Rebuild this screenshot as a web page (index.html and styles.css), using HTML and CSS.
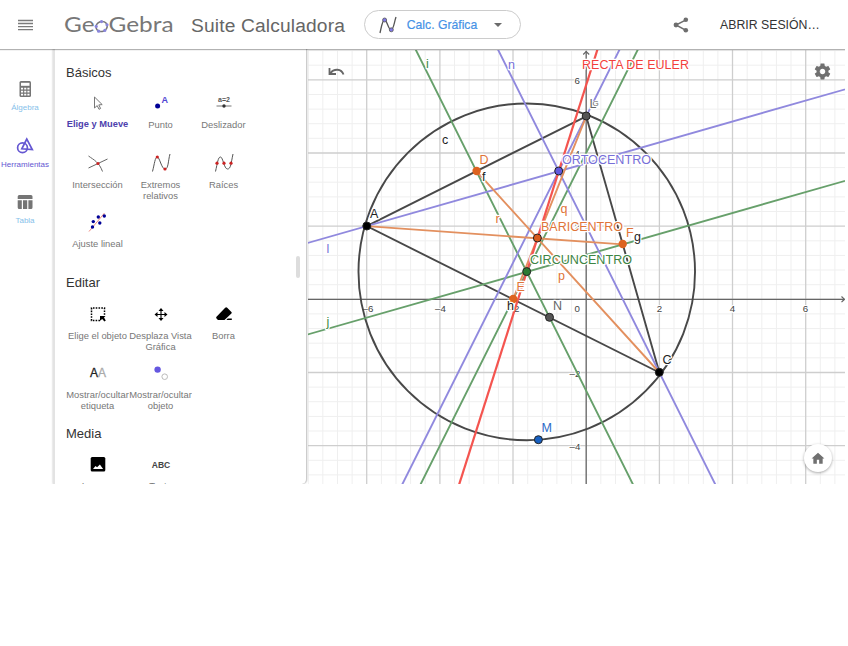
FILE: index.html
```
<!DOCTYPE html>
<html lang="es">
<head>
<meta charset="UTF-8" />
<meta name="viewport" content="width=device-width, initial-scale=1" />
<title>GeoGebra - Suite Calculadora</title>
<link rel="stylesheet" href="styles.css">
</head>
<body>
<div class="app">
  <header class="topbar">
    <button class="menu-btn" aria-label="Menú">
      <svg width="15" height="12" viewBox="0 0 15 12"><path d="M0 1.5h15M0 4.5h15M0 7.6h15M0 10.7h15" stroke="#7b7b7b" stroke-width="1.3"/></svg>
    </button>
    <svg class="logo" width="112" height="32" viewBox="0 -4 112 32">
      <g class="logo-text">
        <text x="0" y="19.3" textLength="30.5" lengthAdjust="spacingAndGlyphs">Ge</text>
        <text x="44.5" y="19.3" textLength="65" lengthAdjust="spacingAndGlyphs">Gebra</text>
      </g>
      <ellipse cx="37.6" cy="13.5" rx="5.7" ry="5" fill="none" stroke="#777" stroke-width="1.5" transform="rotate(-18 37.6 13.5)"/>
      <g fill="#8a86dc">
        <circle cx="37.5" cy="8.6" r="1.6"/><circle cx="43" cy="11.8" r="1.6"/><circle cx="40.8" cy="17.4" r="1.6"/>
        <circle cx="34.6" cy="18.2" r="1.6"/><circle cx="32.2" cy="13.4" r="1.6"/>
      </g>
    </svg>
    <div class="suite">Suite Calculadora</div>
    <button class="app-picker">
      <svg width="18" height="18" viewBox="0 0 18 18">
        <path d="M1 17C2.6 10 3.6 3.5 5.6 3.5S9.5 14 12 14S15 7 17 1" fill="none" stroke="#555" stroke-width="1.3"/>
        <circle cx="5.6" cy="4" r="2" fill="#8179e6" stroke="#555" stroke-width=".8"/>
        <circle cx="12.3" cy="13.8" r="2" fill="#8179e6" stroke="#555" stroke-width=".8"/>
      </svg>
      <span>Calc. Gráfica</span>
      <svg class="caret" width="8" height="4" viewBox="0 0 8 4"><path d="M0 0h8L4 4z" fill="#6b6b6b"/></svg>
    </button>
    <svg class="share" width="16" height="16" viewBox="0 0 16 16">
      <path d="M13 2.8L3 8l10 5.3" fill="none" stroke="#6e6e6e" stroke-width="1.5"/>
      <g fill="#6e6e6e"><circle cx="12.8" cy="2.8" r="2.3"/><circle cx="3" cy="8" r="2.4"/><circle cx="12.8" cy="13.3" r="2.3"/></g>
    </svg>
    <a class="signin">ABRIR SESIÓN…</a>
  </header>

  <main class="workspace">
    <nav class="rail">
      <a class="rail-item">
        <svg width="18" height="18" viewBox="0 0 18 18">
          <rect x="3.5" y="1" width="11.5" height="16" rx="1.5" fill="#757575"/>
          <rect x="5" y="2.8" width="8.5" height="3" fill="#fff"/>
          <path d="M5 8.6h8.5M5 11.6h8.5M5 14.6h8.5" stroke="#fff" stroke-width="1.9" stroke-dasharray="2.1 1.1"/>
        </svg>
        <span>Álgebra</span>
      </a>
      <a class="rail-item active">
        <svg width="18" height="18" viewBox="0 0 18 18">
          <circle cx="6.5" cy="10.8" r="4.9" fill="none" stroke="#6557d2" stroke-width="1.7"/>
          <path d="M10.8 2L5.8 11.8L16.3 12.6z" fill="none" stroke="#6557d2" stroke-width="1.7"/>
        </svg>
        <span>Herramientas</span>
      </a>
      <a class="rail-item">
        <svg width="18" height="18" viewBox="0 0 18 18">
          <path d="M1.7 3.5q0-1.5 1.5-1.5h11.8q1.5 0 1.5 1.5v2.5h-14.8zM1.7 7.3h4.1v8.7h-2.6q-1.5 0-1.5-1.5zM7 7.3h4.2v8.7H7zM12.4 7.3h4.1v7.2q0 1.5-1.5 1.5h-2.6z" fill="#757575"/>
        </svg>
        <span>Tabla</span>
      </a>
    </nav>

    <section class="tools">
      <h2>Básicos</h2>
      <div class="tool-grid">
        <div class="tool selected">
          <svg width="24" height="24" viewBox="0 0 24 24"><path d="M8.5 6v11l2.7-2.4 1.8 3.7 1.6-.8-1.8-3.6 3.4-.3z" fill="#fff" stroke="#777" stroke-width="1"/></svg>
          <span>Elige y Mueve</span>
        </div>
        <div class="tool">
          <svg width="24" height="24" viewBox="0 0 24 24"><circle cx="8.6" cy="15" r="2.5" fill="#000096"/><text x="12.4" y="11.8" class="icon-point">A</text></svg>
          <span>Punto</span>
        </div>
        <div class="tool">
          <svg width="24" height="24" viewBox="0 0 24 24"><text x="12" y="11" class="icon-slider">a=2</text><path d="M4.5 15h15" stroke="#777"/><circle cx="12" cy="15" r="1.7" fill="#333"/></svg>
          <span>Deslizador</span>
        </div>
        <div class="tool">
          <svg width="24" height="24" viewBox="0 0 24 24"><path d="M2.5 5C8 9 13 11 16.5 20.5M2.5 17L21.5 8" fill="none" stroke="#666"/><circle cx="12" cy="12.5" r="1.6" fill="#c22"/></svg>
          <span>Intersección</span>
        </div>
        <div class="tool">
          <svg width="24" height="24" viewBox="0 0 24 24"><path d="M3.5 20.5C5.5 13 6 6 8.3 6S12.5 18 16 18S19 10 21 3" fill="none" stroke="#555"/><circle cx="8.3" cy="6" r="1.6" fill="#c22"/><circle cx="16" cy="18" r="1.6" fill="#c22"/></svg>
          <span>Extremos relativos</span>
        </div>
        <div class="tool">
          <svg width="24" height="24" viewBox="0 0 24 24"><path d="M3.5 20.5C5.5 12 6 6 8.5 6S12 18 15.5 18S19 12 21 3" fill="none" stroke="#555"/><g fill="#c22"><circle cx="5" cy="12.2" r="1.6"/><circle cx="12" cy="12.2" r="1.6"/><circle cx="19" cy="12.2" r="1.6"/></g></svg>
          <span>Raíces</span>
        </div>
        <div class="tool">
          <svg width="24" height="24" viewBox="0 0 24 24"><path d="M3 21.5L18.5 3" stroke="#f08a80"/><g fill="#000096"><circle cx="6.5" cy="17" r="1.7"/><circle cx="7.3" cy="11.6" r="1.7"/><circle cx="13.8" cy="13" r="1.7"/><circle cx="12.3" cy="7" r="1.7"/><circle cx="18.3" cy="6" r="1.7"/></g></svg>
          <span>Ajuste lineal</span>
        </div>
      </div>

      <h2>Editar</h2>
      <div class="tool-grid">
        <div class="tool">
          <svg width="24" height="24" viewBox="0 0 24 24"><path d="M14 18.5H5.5V6h13v8" fill="none" stroke="#000" stroke-width="1.5" stroke-dasharray="1.6 1.2"/><path d="M14 14h5.5l-1.5 1.6 1.8 2.8-1.4 1-2.2-2.4L14 18.7z"/></svg>
          <span>Elige el objeto</span>
        </div>
        <div class="tool">
          <svg width="24" height="24" viewBox="0 0 24 24"><path d="M12 8v9M7.5 12.5h9" stroke="#000" stroke-width="1.1"/><path d="M12 6l2.5 3H9.5zM12 19l2.5-3H9.5zM5.5 12.5l3-2.5v5zM18.5 12.5l-3-2.5v5z"/></svg>
          <span>Desplaza Vista Gráfica</span>
        </div>
        <div class="tool">
          <svg width="24" height="24" viewBox="0 0 24 24"><path d="M13.2 5.7q1-.9 2 0l4.2 4.2q.8.9 0 1.7L12.5 18H6l-1.5-1.6q-.8-.9 0-1.7zM15.800 16.500h4v1.500h-5.500z"/></svg>
          <span>Borra</span>
        </div>
        <div class="tool">
          <svg width="24" height="24" viewBox="0 0 24 24"><text x="4" y="16" class="icon-aa">A<tspan class="icon-aa-off">A</tspan></text></svg>
          <span>Mostrar/ocultar etiqueta</span>
        </div>
        <div class="tool">
          <svg width="24" height="24" viewBox="0 0 24 24"><circle cx="8.6" cy="8.6" r="3.2" fill="#6557e0"/><circle cx="15.7" cy="15.7" r="2.8" fill="#fff" stroke="#bbb"/></svg>
          <span>Mostrar/ocultar objeto</span>
        </div>
      </div>

      <h2>Media</h2>
      <div class="tool-grid">
        <div class="tool">
          <svg width="24" height="24" viewBox="0 0 24 24"><rect x="4.7" y="5" width="14.6" height="14.5" rx="1.5"/><path d="M7 17l2.5-3 1.6 1.3 2.8-2.8 3.2 4.5z" fill="#fff"/></svg>
          <span>Imagen</span>
        </div>
        <div class="tool">
          <svg width="24" height="24" viewBox="0 0 24 24"><text x="12" y="15.8" class="icon-abc">ABC</text></svg>
          <span>Texto</span>
        </div>
      </div>
      <div class="drag-handle"></div>
    </section>

    <section class="graphics">
      <svg class="plot" width="537" height="434" viewBox="308 50 537 434">
        <path id="gridMinor" class="grid-minor"/>
        <path id="gridMajor" class="grid-major"/>
        <g class="axes">
          <path d="M308 299.3H844M586.2 484V51"/>
          <path d="M841.5 296.5l3 2.8-3 2.8M583.2 54.5l3-3 3 3"/>
        </g>
        <g class="ticks">
          <text x="368" y="312">–6</text><text x="440.5" y="312">–4</text><text x="514" y="312">–2</text>
          <text x="577.3" y="312">0</text><text x="659.5" y="312">2</text><text x="732.5" y="312">4</text><text x="805.5" y="312">6</text>
          <text x="577.3" y="83.5">6</text><text x="577.3" y="156.5">4</text><text x="577.3" y="230">2</text>
          <text x="575" y="376.5">–2</text><text x="575" y="449.5">–4</text>
        </g>

        <!-- construction, in graph units with y up -->
        <g class="shapes" transform="translate(586.2 299.3) scale(36.58 -36.6)">
          <circle class="black" cx="-1.625" cy=".75" r="4.6"/>
          <path class="black" d="M-6 2L0 5L2 -2Z"/>
          <path class="green" d="M-5.625 8.75L2.375 -7.25M-8.625 -1.25L8.875 3.75M-5.625 -7.25L2.375 8.75"/>
          <path class="purple" d="M-9.5 1L8 6M-6 -7L1.5 8M-3.5 9L4.5 -7"/>
          <path class="orange" d="M-6 2L1 1.5M0 5L-2 0M2 -2L-3 3.5"/>
          <path class="red" d="M-4.125 -7.107L.875 8.607"/>
        </g>

        <g class="points">
          <circle cx="366.8" cy="226" r="4" fill="#000"/>
          <circle cx="586.2" cy="116" r="4" fill="#555"/>
          <circle cx="659.3" cy="372.3" r="4" fill="#000"/>
          <circle cx="476.6" cy="171" r="4.2" class="mid"/>
          <circle cx="513.2" cy="299" r="4.2" class="mid"/>
          <circle cx="622.7" cy="244" r="4.2" class="mid"/>
          <circle cx="558.7" cy="171" r="4" fill="#6159df"/>
          <circle cx="537.4" cy="238" r="4" fill="#d95b1c"/>
          <circle cx="526.7" cy="271.6" r="4" fill="#2b7a33"/>
          <circle cx="549.5" cy="317.3" r="4" fill="#555"/>
          <circle cx="538.4" cy="439.7" r="4" fill="#1760c2"/>
        </g>

        <g class="labels">
          <text x="426" y="68" class="t-green">i</text>
          <text x="508" y="68.5" class="t-purple">n</text>
          <text x="582" y="68.5" class="t-red" textLength="107" lengthAdjust="spacingAndGlyphs">RECTA DE EULER</text>
          <text x="442" y="144">c</text>
          <text x="479.5" y="163.5" class="t-orange">D</text>
          <text x="482" y="181">f</text>
          <text x="370" y="217.5">A</text>
          <text x="326.5" y="253" class="t-purple">l</text>
          <text x="326.5" y="325.5" class="t-green">j</text>
          <text x="495.5" y="222.5" class="t-orange">r</text>
          <text x="560.5" y="213" class="t-orange">q</text>
          <text x="558" y="280" class="t-orange">p</text>
          <text x="562" y="164" class="t-purple" textLength="89" lengthAdjust="spacingAndGlyphs">ORTOCENTRO</text>
          <text x="541" y="230.5" class="t-orange" textLength="82" lengthAdjust="spacingAndGlyphs">BARICENTRO</text>
          <text x="530" y="264" class="t-green" textLength="102" lengthAdjust="spacingAndGlyphs">CIRCUNCENTRO</text>
          <text x="626" y="236.5" class="t-orange">F</text>
          <text x="634" y="241">g</text>
          <text x="516.5" y="291" class="t-orange">E</text>
          <text x="507" y="309.5">h</text>
          <text x="553" y="310" class="t-gray">N</text>
          <text x="541.5" y="431.5" class="t-blue">M</text>
          <text x="662.5" y="364">C</text>
          <text x="589.5" y="108" class="t-gray">L</text>
          <text x="592.5" y="106" class="t-gray t-small">G</text>
        </g>
      </svg>
      <svg class="undo" width="18" height="10" viewBox="0 0 18 10"><path d="M1.5 1v6h6.5" fill="none" stroke="#666" stroke-width="1.8"/><path d="M2 6.5C6 1.2 13.5 1.5 15.5 7.5" fill="none" stroke="#666" stroke-width="1.8"/></svg>
      <svg class="gear" width="19" height="19" viewBox="0 0 24 24"><path fill="#707070" d="M19.43 12.98c.04-.32.07-.64.07-.98s-.03-.66-.07-.98l2.11-1.65c.19-.15.24-.42.12-.64l-2-3.46c-.12-.22-.39-.3-.61-.22l-2.490 1c-.52-.4-1.08-.73-1.69-.98l-.38-2.65C14.46 2.18 14.25 2 14 2h-4c-.25 0-.46.18-.49.42l-.38 2.65c-.61.25-1.17.59-1.69.98l-2.49-1c-.23-.09-.49 0-.61.22l-2 3.46c-.13.22-.07.49.12.64l2.11 1.65c-.04.32-.07.65-.07.98s.03.66.07.98l-2.11 1.65c-.19.15-.24.42-.12.64l2 3.46c.12.22.39.3.61.22l2.49-1c.52.4 1.08.73 1.69.98l.38 2.65c.03.24.24.42.49.42h4c.25 0 .46-.18.49-.42l.38-2.65c.61-.25 1.17-.59 1.69-.98l2.49 1c.23.09.49 0 .61-.22l2-3.46c.12-.22.07-.49-.12-.64l-2.11-1.65zM12 15.5c-1.93 0-3.5-1.57-3.5-3.5s1.57-3.5 3.5-3.5 3.5 1.57 3.5 3.5-1.57 3.5-3.5 3.5z"/></svg>
      <button class="home" aria-label="Vista estándar">
        <svg width="14" height="14" viewBox="0 0 24 24"><path fill="#707070" d="M10 22v-7h4v7h6v-9h3L12 3 1 13h3v9z"/></svg>
      </button>
    </section>
  </main>
</div>
<script>
const origin = { x: 586.2, y: 299.3 };
const unit = 36.58;
function gridPath(step, skip) {
  let d = "";
  for (let i = -30; i <= 30; i++) {
    if (skip && i % skip === 0) continue;
    const x = (origin.x + i * step * unit).toFixed(1);
    const y = (origin.y + i * step * unit).toFixed(1);
    d += `M${x} 50V484M308 ${y}H845`;
  }
  return d;
}
document.getElementById("gridMinor").setAttribute("d", gridPath(0.4, 5));
document.getElementById("gridMajor").setAttribute("d", gridPath(2));
</script>
</body>
</html>
```
FILE: styles.css
```
body {
  margin: 0;
  background: #fff;
  font-family: "Liberation Sans", Arial, sans-serif;
  color: #333;
}
button {
  padding: 0;
  border: none;
  background: none;
  font-family: inherit;
}
svg {
  display: block;
  flex: none;
}
.app {
  width: 845px;
  height: 484px;
  overflow: hidden;
  display: flex;
  flex-direction: column;
}
.topbar {
  position: relative;
  z-index: 3;
  height: 49px;
  flex: none;
  display: flex;
  align-items: center;
  background: #fff;
  box-shadow: 0 1px 1px rgba(0,0,0,0.3);
}
.menu-btn {
  margin-left: 18px;
}
.logo {
  margin-left: 31px;
}
.logo-text {
  font-family: Lato, sans-serif;
  font-size: 21.5px;
  fill: #777;
}
.suite {
  width: 158px;
  margin: 2px 0 0 15px;
  font-size: 19.2px;
  letter-spacing: 0.15px;
  color: #666;
  white-space: nowrap;
}
.app-picker {
  box-sizing: border-box;
  width: 157px;
  height: 29px;
  margin-left: 15px;
  padding-left: 14px;
  display: flex;
  align-items: center;
  border: 1px solid #ccc;
  border-radius: 15px;
  font-size: 12.2px;
  color: #4592e6;
  white-space: nowrap;
}
.app-picker span {
  margin-left: 8px;
  width: 74px;
  -webkit-text-stroke: 0.2px #4592e6;
}
.caret {
  margin-left: 15px;
}
.share {
  margin-left: 152px;
}
.signin {
  margin-left: 31px;
  font-size: 12.3px;
  color: #333;
  white-space: nowrap;
}
.workspace {
  flex: 1;
  min-height: 0;
  display: flex;
}
.rail {
  width: 53px;
  flex: none;
  padding: 31px 3px 0 0;
  box-sizing: border-box;
}
.rail-item {
  height: 56.7px;
  display: flex;
  flex-direction: column;
  align-items: center;
  font-size: 8px;
  color: #86c1ea;
}
.rail-item span {
  margin-top: 5px;
  line-height: 10px;
}
.rail-item.active {
  color: #6557d2;
}
.tools {
  position: relative;
  z-index: 2;
  box-sizing: border-box;
  width: 254px;
  flex: none;
  padding: 10.6px 0 0 11px;
  overflow: hidden;
  background: #fff;
  border-left: 2px solid #e3e3e3;
  border-right: 1px solid #ccc;
  border-radius: 0 0 5px 0;
  box-shadow: 0 0 2px rgba(0,0,0,0.3);
}
.tools h2 {
  height: 31.3px;
  margin: 0;
  font-size: 13px;
  font-weight: normal;
  line-height: 25px;
  color: #333;
}
.tool-grid {
  width: 189px;
  display: grid;
  grid-template-columns: repeat(3, 63px);
  grid-auto-rows: 59.8px;
}
.tool {
  display: flex;
  flex-direction: column;
  align-items: center;
  overflow: hidden;
  font-size: 9.4px;
  line-height: 11px;
  text-align: center;
  color: #777;
}
.tool span {
  width: 63px;
  margin-top: 4px;
}
.tool.selected {
  color: #4d3fad;
  font-weight: bold;
  font-size: 9.3px;
}
.icon-point {
  font-size: 9px;
  font-weight: bold;
  fill: #5145d2;
}
.icon-slider {
  font-size: 7px;
  font-weight: bold;
  text-anchor: middle;
  fill: #555;
}
.icon-aa {
  font-size: 12px;
  fill: #222;
  stroke: #222;
  stroke-width: 0.3px;
}
.icon-aa-off {
  fill: #aaa;
  stroke: #aaa;
}
.icon-abc {
  font-size: 8.5px;
  font-weight: bold;
  text-anchor: middle;
  fill: #444;
}
.drag-handle {
  position: absolute;
  top: 207px;
  right: 6px;
  width: 4px;
  height: 22px;
  border-radius: 2px;
  background: #ddd;
}
.graphics {
  position: relative;
  flex: 1;
}
.plot {
  margin-top: 1px;
  margin-left: 1px;
}
.grid-minor {
  stroke: #efefef;
  stroke-width: 1;
}
.grid-major {
  stroke: #cecece;
  stroke-width: 1.3;
}
.axes {
  fill: none;
  stroke: #666;
  stroke-width: 1.2;
}
.ticks text {
  font-size: 9.7px;
  text-anchor: middle;
  fill: #444;
  stroke: #fff;
  stroke-width: 2px;
  paint-order: stroke;
}
.shapes * {
  fill: none;
  stroke-width: 1.9px;
  vector-effect: non-scaling-stroke;
}
.shapes .black { stroke: #484848; }
.shapes .green { stroke: #67a06b; }
.shapes .purple { stroke: #9089de; }
.shapes .orange { stroke: #e3905f; }
.shapes .red { stroke: #f4544f; stroke-width: 2.2px; }
.points circle {
  stroke: #222;
  stroke-width: 1;
}
.points .mid {
  fill: #dd6320;
  stroke: none;
}
.labels text {
  font-size: 12.5px;
  fill: #222;
  stroke: #fff;
  stroke-width: 2.5px;
  stroke-linejoin: round;
  paint-order: stroke;
}
.labels .t-green { fill: #3d8544; }
.labels .t-purple { fill: #776fd8; }
.labels .t-red { fill: #f33f3c; }
.labels .t-orange { fill: #df7438; }
.labels .t-blue { fill: #2a69c6; }
.labels .t-gray { fill: #666; }
.labels .t-small { font-size: 8px; stroke-width: 1px; }
.undo {
  position: absolute;
  top: 18px;
  left: 21px;
}
.gear {
  position: absolute;
  top: 13px;
  right: 13px;
}
.home {
  position: absolute;
  right: 13px;
  bottom: 12px;
  width: 28px;
  height: 28px;
  display: flex;
  align-items: center;
  justify-content: center;
  border-radius: 50%;
  background: #fff;
  box-shadow: 0 1px 3px rgba(0,0,0,0.35);
}
```
